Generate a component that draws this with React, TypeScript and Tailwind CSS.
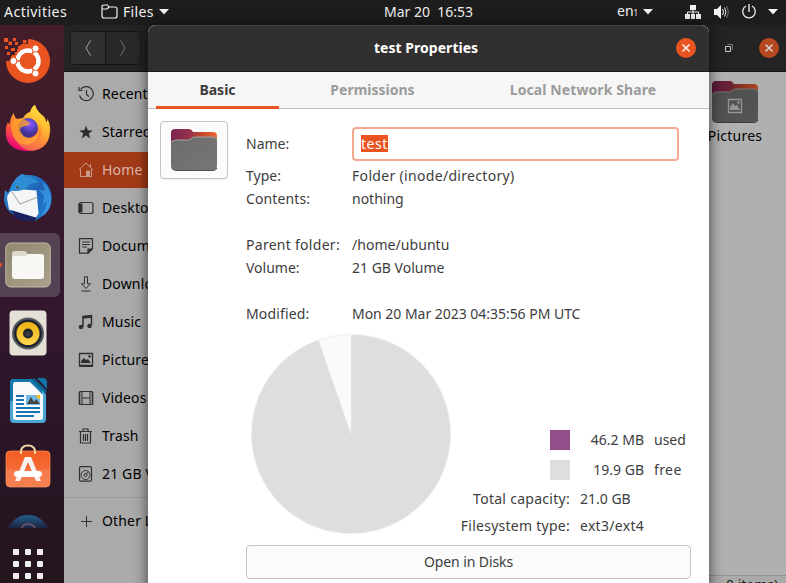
import React from "react";

type IconProps = { className?: string };

const FolderBig = ({ picture, dim }: { picture?: boolean; dim?: boolean }) => (
  <svg width="48" height="44" viewBox="0 0 48 44" className={dim ? "shrink-0 brightness-[0.72]" : "shrink-0"}>
    <defs>
      <linearGradient id="fb" x1="0" x2="1"><stop offset="0" stopColor="#7b2350" /><stop offset=".4" stopColor="#94324b" /><stop offset=".65" stopColor="#c2462e" /><stop offset="1" stopColor="#f0652b" /></linearGradient>
      <linearGradient id="ff" x1="0" y1="0" x2="1" y2="1"><stop offset="0" stopColor="#6c6c6c" /><stop offset="1" stopColor="#767676" /></linearGradient>
    </defs>
    <path d="M1 5q0-4 4-4h14q2 0 3 1.500l1 1.500h20q4 0 4 4v9H1z" fill="url(#fb)" />
    <path d="M1 16q0-4 4-4h13q2 0 3-1l1-1q1-1 3-1h18q4 0 4 4v25q0 4-4 4H5q-4 0-4-4z" fill="url(#ff)" />
    <path d="M1.500 15q.5-3 4-3h12.500q2 0 3-1l1-1q1-1 3-1h18q3.500 0 4 3" fill="none" stroke="#a3a3a3" strokeWidth="1" />
    <path d="M2 40q1 2.500 4 2.500h37q3 0 4-2.500" fill="none" stroke="#505050" strokeWidth="1" />
    {picture && <g><path d="M17.500 19.500h13v13h-13z" fill="none" stroke="#cfcfcf" strokeWidth="1.300" /><path d="M19 30v-3l3-4 2 3 2-1 3 5z" fill="#cfcfcf" /><circle cx="27.500" cy="22.500" r="1.300" fill="#cfcfcf" /></g>}
  </svg>
);

const UbuntuLogo = () => (
  <svg width="56" height="56" viewBox="0 0 56 56">
    <circle cx="28" cy="31" r="22" fill="#e95420" />
    <path d="M2 6h26v8h-7v5h-4v6h-5v6H2z" fill="#431e28" />
    <g fill="#e95420"><path d="M4 8h4v4H4zM13 8h3v3h-3zM23 10h3.500v3.500H23zM8.500 11.500H12v3.500H8.500zM15 12h3v3h-3zM5 16h3v3H5zM18 16h4v3h-4zM11 18h4v3h-4zM7 22h3v3H7zM15 22h5v5h-5zM11 26h5v6h-5zM20 15h6v8h-6z" /></g>
    <circle cx="28" cy="31" r="10.500" fill="none" stroke="#fff" strokeWidth="4.500" />
    <g stroke="#e95420" strokeWidth="1.500"><path d="M28 31 36 17M28 31l8 14M28 31H12" /></g>
    <circle cx="28" cy="31" r="8" fill="#e95420" />
    <g fill="#fff" stroke="#e95420" strokeWidth="1"><circle cx="13.500" cy="31" r="3.500" /><circle cx="35.500" cy="18.500" r="3.500" /><circle cx="35.500" cy="43.500" r="3.500" /></g>
  </svg>
);

const Firefox = () => (
  <svg width="48" height="48" viewBox="0 0 48 48">
    <defs>
      <linearGradient id="fx" x1=".8" y1="0" x2=".3" y2="1"><stop offset="0" stopColor="#fff04d" /><stop offset=".35" stopColor="#ffb52e" /><stop offset=".65" stopColor="#ff5d3b" /><stop offset="1" stopColor="#e60078" /></linearGradient>
      <radialGradient id="fxg" cx=".6" cy=".3"><stop offset="0" stopColor="#9059ff" /><stop offset=".6" stopColor="#5a46c8" /><stop offset="1" stopColor="#47308f" /></radialGradient>
      <linearGradient id="fxo" x1="0" y1="0" x2="1" y2="1"><stop offset="0" stopColor="#ff9a22" /><stop offset="1" stopColor="#ffc338" /></linearGradient>
    </defs>
    <path d="M10 8q0 4 3 6l6-1q3-5 7-6 2-6 5-7 2 6 7 10 4 3 4 7 2-1 1-4 4 7 3 15-2 18-22 18Q5 46 2 31q-1-9 2-14 0 2 2 2 0-7 4-11z" fill="url(#fx)" />
    <path d="M26 8q9 3 12 13 1 12-9 17-10 3-18-4 8 14 21 11 13-4 13-17 0-7-3-11-2-1-2-4l-3-4Q33 6 31 0q-4 2-5 8z" fill="#ffcf36" opacity=".4" />
    <circle cx="24" cy="23" r="10" fill="url(#fxg)" />
    <path d="M7 17q5-5 10-2 4-2 6 1l3 2q-1 3-5 3-5 1-5 4 2 7 9 8 6 0 10-6 0 9-9 12-10 2-16-6-3-5-3-16z" fill="url(#fxo)" opacity=".75" />
  </svg>
);

const Thunderbird = () => (
  <svg width="50" height="50" viewBox="0 0 50 50">
    <defs><linearGradient id="tb" x1="0" y1="0" x2="1" y2="1"><stop offset="0" stopColor="#3ca7e8" /><stop offset=".5" stopColor="#1e62b8" /><stop offset="1" stopColor="#2583d0" /></linearGradient></defs>
    <path d="M9 11Q14 3 19 1l4 1q19-1 25 17 3 14-7 23l-9 6 1-4H17Q3 41 1 27l1-10 3 3z" fill="url(#tb)" />
    <path d="M1 27q1 13 10 17l1-1-4-6 26 8-3 3h-5Q13 48 5 39 1 34 1 27z" fill="#1b205f" />
    <path d="M4 25q1-7 9.500-9l20 1.500 2 23-2.500 4-27-8z" fill="#f4f5f6" />
    <path d="m9 19 8 12 18-7" fill="none" stroke="#8a8a8a" strokeWidth=".8" />
    <path d="M9 18Q10 6 22 4q9-1 14 6-8-1-12 4-3 3-9 4z" fill="#2d8ed4" />
    <path d="M36 17l5 6-1 9 4-4-2 9-5 7q12-5 11-20-2-11-10-16 4 6 4 10z" fill="#42a8ec" opacity=".6" />
    <circle cx="14.500" cy="14.500" r="1.200" fill="#5b4a1e" />
  </svg>
);

const FilesApp = () => (
  <svg width="46" height="46" viewBox="0 0 46 46">
    <defs><linearGradient id="fa" x1="0" y1="0" x2="1" y2="1"><stop offset="0" stopColor="#91886f" /><stop offset="1" stopColor="#a9a18c" /></linearGradient></defs>
    <rect x=".8" y="1" width="44.500" height="44" rx="5" fill="url(#fa)" stroke="#c0b9a5" />
    <path d="M7 12q0-3 3-3h10l3 3h13q3 0 3 3v7H7z" fill="#dedacd" />
    <path d="M7 17q0-3 3-3h9q2 0 3-1l1-1h13q3 0 3 3v19q0 3-3 3H10q-3 0-3-3z" fill="#f8f7f4" />
  </svg>
);

const Rhythmbox = () => (
  <svg width="38" height="46" viewBox="0 0 38 46">
    <defs><linearGradient id="rb" x1="0" x2="0" y1="0" y2="1"><stop offset="0" stopColor="#edb211" /><stop offset="1" stopColor="#ffd64d" /></linearGradient></defs>
    <rect x=".5" y=".5" width="37" height="45" rx="4" fill="#e4e0d5" />
    <circle cx="19" cy="23.500" r="15" fill="#23252c" stroke="#575b64" strokeWidth="2" />
    <circle cx="19" cy="23.500" r="11.500" fill="url(#rb)" /><circle cx="19" cy="23.500" r="5" fill="#24262b" /><circle cx="19" cy="24" r="2.500" fill="#3a3c41" />
  </svg>
);

const Writer = () => (
  <svg width="38" height="46" viewBox="0 0 38 46">
    <path d="M5 1h18l14 15v25q0 4-4 4H5q-4 0-4-4V5q0-4 4-4z" fill="#48a8d2" /><path d="M5 1h18l10 11v11H1V5q0-4 4-4z" fill="#1478ad" />
    <path d="M6 4h15l13 13v22q0 3-3 3H7q-3 0-3-3V7q0-3 2-3z" fill="#f8fafb" />
    <path d="M28 0h6q3 0 4 3v8z" fill="#1174a7" /><path d="m24 1 13 13" stroke="#0c638f" strokeWidth="3" />
    <g fill="#1675b1"><path d="M7 17h8v2H7zM7 21h8v2H7zM7 25h8v2H7zM7 29h24v2H7zM7 33h24v2H7zM7 37h18v2H7z" /></g>
    <path d="M17 17h14v10H17z" fill="#72b9e3" /><path d="m18 26 4-7 3 5 2-3 4 5z" fill="#444" /><path d="M27 17h4v4q-3 0-4-4z" fill="#f2bd16" />
  </svg>
);

const Software = () => (
  <svg width="46" height="44" viewBox="0 0 46 44">
    <defs><linearGradient id="so" x1="0" x2="0" y1="0" y2="1"><stop offset="0" stopColor="#f45d24" /><stop offset=".5" stopColor="#f46a34" /><stop offset=".52" stopColor="#f77a4a" /><stop offset="1" stopColor="#f57f50" /></linearGradient></defs>
    <rect x="1" y="7" width="44" height="36" rx="4" fill="url(#so)" stroke="#ff9363" strokeWidth=".7" />
    <path d="M16 10V8q0-6.500 7-6.500T30 8v2" fill="none" stroke="#f5d59f" strokeWidth="2" />
    <path d="M20 13h6l10 24h-5l-8-19-8 19h-5z" fill="#f9f4f0" /><rect x="9" y="27" width="28" height="6" rx="3" fill="#fff" />
  </svg>
);

const symbols: Record<string, React.ReactNode> = {
  recent: <g fill="none" stroke="currentColor" strokeWidth="1.200"><path d="M2.500 3.500a7 7 0 1 1-1 6" /><path d="M1 1v3.500h3.500M8.500 4v4.500l2.500 2" /></g>,
  star: <path d="m8 1.500 1.800 4.700 5 .2-4 3.100 1.500 4.900L8 11.600l-4.300 2.800 1.500-4.900-4-3.100 5-.2z" fill="currentColor" />,
  home: <g fill="none" stroke="currentColor"><path d="M.7 8 8 1l7.300 7M2.500 7v7.500h11V7M12.500 2v3" /><path d="M8.500 9h3v5h-3z" fill="currentColor" /></g>,
  desktop: <g fill="none" stroke="currentColor"><rect x="1" y="2.500" width="14" height="11" rx="2" strokeWidth="1.200" /><path d="M1 4h3v8H1z" fill="currentColor" /></g>,
  doc: <g fill="none" stroke="currentColor" strokeWidth="1.200"><path d="M1.500.7h13v10l-4.500 4.500H1.500z" /><path d="M4 4h8M4 6.500h8M4 9h5" /><path d="M10 15v-4h4z" fill="currentColor" /></g>,
  download: <g fill="none" stroke="currentColor"><path d="M6.500.7h3v7h3L8 12.500 3.500 7.700h3zM3.500 15h9" /></g>,
  music: <g fill="none" stroke="currentColor" strokeWidth="1.500"><path d="M5 13V2.500l8.500-1V11M5 4l8-1" /><circle cx="3" cy="13" r="1.500" fill="currentColor" /><circle cx="11.500" cy="12" r="1.500" fill="currentColor" /></g>,
  picture: <g><path d="M1.500 1.500h13v12h-13z" fill="none" stroke="currentColor" strokeWidth="1.300" /><path d="M1 13h14v2H1zM3 11V9l3-3 2 2 2-1 3 4z" fill="currentColor" /><circle cx="11.500" cy="4.500" r="1.300" fill="currentColor" /></g>,
  video: <g fill="none" stroke="currentColor"><path d="M1.500 1.500h13v13h-13zM4 1.500v13M12 1.500v13M4 8h8" /><path d="M1.500 2v13M14.500 2v13" strokeWidth="2" strokeDasharray="1.500 1" /></g>,
  trash: <g fill="none" stroke="currentColor" strokeWidth="1.200"><path d="M1 3.500h13M5 3V1h5v2M2.500 4v11h10V4M5.500 6v7M7.500 6v7M9.500 6v7" /></g>,
  disk: <g fill="none" stroke="currentColor"><rect x="1.500" y=".7" width="12" height="14.500" rx="1.500" strokeWidth="1.200" /><circle cx="7.500" cy="9" r="4.500" /><circle cx="7.500" cy="9" r="1.500" /><path d="m8 8 2.500-2.500" /></g>,
  plus: <path d="M8.500 3v11M3 8.500h11" stroke="currentColor" />,
};

const Place = ({ icon, label, active }: { icon: string; label: string; active?: boolean }) => (
  <div className={`flex h-9 shrink-0 items-center gap-2 pl-3.5 tracking-[0.15px] ${active ? "bg-[#a33a17] text-[#d9b5a7]" : "text-black"}`}>
    <svg width="16" height="16" viewBox="0 0 16 16" className={`shrink-0 ${active ? "text-[#cc9a88]" : "text-[#303030]"}`}>{symbols[icon]}</svg>
    <span className="whitespace-nowrap">{label}</span>
  </div>
);

const Caret = ({ className }: IconProps) => <svg width="10" height="6" viewBox="0 0 10 6" className={className}><path d="M0 0h10L5 5.500z" fill="currentColor" /></svg>;

const Close = ({ className }: IconProps) => (
  <div className={`flex size-5 items-center justify-center rounded-full ${className}`}>
    <svg width="8" height="8" viewBox="0 0 8 8"><path d="m.5.5 7 7m0-7-7 7" stroke="currentColor" strokeWidth="1.400" /></svg>
  </div>
);

const TopBar = () => (
  <header className="flex h-[25px] shrink-0 items-center bg-[#1d1d1d] pb-[2px] text-[#f2f2f2]">
    <span className="ml-1 w-[97px] tracking-[0.48px]">Activities</span>
    <svg width="17" height="16" viewBox="0 0 17 16"><path d="M1 12V3q0-2 2-2h3.500l1.500 2h6q2 0 2 2v7q0 2-2 2H3q-2 0-2-2zM1 5h5l2-2" fill="none" stroke="currentColor" strokeWidth="1.200" /></svg>
    <span className="ml-[5px] w-9 tracking-[0.35px]">Files</span><Caret />
    <span className="ml-[215px] w-[233px] whitespace-pre">Mar 20  16:53</span>
    <span className="w-[26px]">en<small className="text-[8px]">1</small></span><Caret />
    <svg className="ml-[32px]" width="16" height="16" viewBox="0 0 16 16" fill="currentColor"><path d="M5 1h6v5H5zM0 10h5v5H0zM6 10h4v5H6zM11 10h5v5h-5z" /><path d="M8 5v6M2.500 11V8h11v3" fill="none" stroke="currentColor" /></svg>
    <svg className="ml-[12px]" width="16" height="16" viewBox="0 0 16 16"><path d="M1 5h3l4-4v14l-4-4H1z" fill="currentColor" /><path d="M9.500 5q2 3 0 6M11.500 3.500q3 4.500 0 9" fill="none" stroke="currentColor" /><path d="M13.500 2q3.500 6 0 12" fill="none" stroke="#777" /></svg>
    <svg className="ml-[12px]" width="16" height="16" viewBox="0 0 16 16"><path d="M5 2a6.300 6.300 0 1 0 6 0M8 0v8" fill="none" stroke="currentColor" strokeWidth="1.300" /></svg>
    <Caret className="ml-[11px]" />
  </header>
);

const Dock = () => (
  <nav className="flex w-16 shrink-0 flex-col overflow-hidden bg-linear-to-b from-[#431e28] via-[#32172f] to-[#23141d]">
    <div className="h-[73px] pt-[5px]"><UbuntuLogo /></div>
    <div className="h-[75px] pt-[7px] pl-1"><Firefox /></div>
    <div className="h-[60px] pl-[3px]"><Thunderbird /></div>
    <div className="flex h-16 w-[60px] items-center rounded-r-md bg-[#554252]"><div className="h-1 w-[2px] rounded-r bg-[#e95420]" /><div className="ml-[3px]"><FilesApp /></div></div>
    <div className="h-[68px] pt-[13px] pl-[9px]"><Rhythmbox /></div>
    <div className="h-[68px] pt-[13px] pl-[9px]"><Writer /></div>
    <div className="h-[70px] pt-[11px] pl-[5px]"><Software /></div>
    <div className="flex h-[25px] items-end pl-2"><svg width="40" height="13" viewBox="0 0 40 13"><defs><linearGradient id="hp" x1="0" x2="0" y1="0" y2="1"><stop offset="0" stopColor="#245d8d" /><stop offset="1" stopColor="#1c2340" /></linearGradient></defs><path d="M0 13Q7 0 20 0t20 13z" fill="url(#hp)" /><path d="M14 13q1-4 6-4t7 4" stroke="#615066" strokeWidth="2" fill="none" /></svg></div>
    <div className="mt-[21px] ml-[13px] grid w-[30px] shrink-0 grid-cols-3 gap-1.5">
      {Array.from({ length: 9 }, (_, i) => <i key={i} className="size-1.5 rounded-[1px] bg-[#eee]" />)}
    </div>
  </nav>
);

const FilesWindow = () => (
  <main className="flex min-w-0 flex-1 flex-col">
    <div className="flex h-[47px] shrink-0 items-center border-b border-[#111] bg-[#242222] pl-1.5">
      <div className="flex h-[34px] w-[71px] overflow-hidden rounded border border-[#171616] bg-[#292828] text-[#aaa]">
        <div className="flex flex-1 items-center justify-center border-r border-[#171616] bg-[#312f30]"><svg width="6" height="16" viewBox="0 0 6 16"><path d="M5.500.5 1 8l4.500 7.500" fill="none" stroke="currentColor" /></svg></div>
        <div className="flex flex-1 items-center justify-center"><svg width="6" height="16" viewBox="0 0 6 16"><path d="M.5.5 5 8 .5 15.500" fill="none" stroke="#707070" /></svg></div>
      </div>
      <svg className="ml-[584px]" width="8" height="8" viewBox="0 0 8 8"><path d="M.5 2.500h5v5h-5z" fill="none" stroke="#c8c8c8" /><path d="M2.500.5h5v5" fill="none" stroke="#777" /></svg>
      <Close className="ml-[26px] bg-[#b54820] text-[#ddd]" />
    </div>
    <div className="flex min-h-0 flex-1">
      <aside className="flex w-[180px] shrink-0 flex-col gap-0.5 overflow-hidden bg-[#aaa] pt-1">
        <Place icon="recent" label="Recent" /><Place icon="star" label="Starred" /><Place icon="home" label="Home" active /><Place icon="desktop" label="Desktop" /><Place icon="doc" label="Documents" /><Place icon="download" label="Downloads" /><Place icon="music" label="Music" /><Place icon="picture" label="Pictures" /><Place icon="video" label="Videos" /><Place icon="trash" label="Trash" /><Place icon="disk" label="21 GB Volume" />
        <div className="my-[3px] h-px shrink-0 bg-[#999]" />
        <Place icon="plus" label="Other Locations" />
      </aside>
      <section className="flex flex-1 flex-col justify-between overflow-hidden bg-[#b0b0b0]">
        <div className="ml-[455px] flex w-[72px] flex-col items-center pt-2 text-black"><FolderBig picture dim /><span className="mt-[2px] tracking-[0.25px]">Pictures</span></div>
        <div className="h-2 border-t border-[#929292] bg-[#aaa] pl-[482px] leading-[18px] whitespace-nowrap text-[#222]">0 items)</div>
      </section>
    </div>
  </main>
);

const Row = ({ label, value, className = "", labelClass = "", valueClass = "" }: { label: string; value: string; className?: string; labelClass?: string; valueClass?: string }) => (
  <div className={`flex h-[23px] items-center whitespace-nowrap ${className}`}><span className={`w-[106px] ${labelClass}`}>{label}</span><span className={valueClass}>{value}</span></div>
);

const Properties = () => (
  <div className="absolute top-[25px] left-[148px] flex h-[570px] w-[561px] flex-col rounded-t-lg bg-white text-[#3d3d3d] shadow-[0_0_14px_rgba(0,0,0,0.65)]">
    <div className="flex h-[47px] shrink-0 items-center rounded-t-lg border-t border-b border-t-[#454344] border-b-[#1c1a1b] bg-[#322f30] pb-px pl-[226px] font-bold text-white">
      <span className="w-[302px] tracking-[0.03px]">test Properties</span><Close className="bg-[#e95420] text-white" />
    </div>
    <div className="flex h-[37px] shrink-0 border-b border-[#bfbfbf] bg-[#f6f6f6] pl-2 text-center leading-[36px] font-bold text-[#9b9b9b]">
      <div className="h-[37px] w-[123px] border-b-[3px] border-[#e95420] text-[#3d3d3d]">Basic</div><div className="ml-4 w-[155px]">Permissions</div><div className="ml-[52px] w-[162px] tracking-[0.1px]">Local Network Share</div>
    </div>
    <div className="flex px-3 pt-3">
      <div className="flex h-[58px] w-[68px] shrink-0 items-center justify-center rounded border border-[#c4c4c4] bg-[#fbfbfb] shadow-[0_1px_1px_#eee]"><FolderBig /></div>
      <div className="ml-[18px] flex w-[445px] flex-col">
        <div className="flex h-[46px] items-center"><span className="w-[106px]">Name:</span><div className="flex h-[34px] w-[327px] items-center rounded border-2 border-[#f4aa90] pb-px pl-[7px]"><span className="bg-[#e95420] leading-[17px] tracking-[0.5px] text-white">test</span></div></div>
        <div className="-mt-[3px]"><Row label="Type:" value="Folder (inode/directory)" valueClass="tracking-[0.32px]" /><Row label="Contents:" labelClass="tracking-[0.12px]" value="nothing" /></div>
        <Row className="mt-[23px]" label="Parent folder:" labelClass="tracking-[0.28px]" value="/home/ubuntu" valueClass="tracking-[0.05px]" /><Row label="Volume:" value="21 GB Volume" />
        <Row className="mt-[23px]" label="Modified:" labelClass="tracking-[0.15px]" value="Mon 20 Mar 2023 04:35:56 PM UTC" valueClass="tracking-[-0.03px]" />
        <div className="flex h-[220px]">
          <svg width="210" height="210" viewBox="0 0 210 210"><circle cx="105" cy="109" r="99.500" fill="#dedede" stroke="#ececec" /><path d="M105 109V9.500A99.500 99.500 0 0 0 72.500 15z" fill="#fafafa" stroke="#eee" strokeWidth=".5" /></svg>
          <div className="flex w-[235px] flex-col pt-[100px] whitespace-nowrap">
            <div className="flex h-[30px] items-center"><i className="ml-[94px] size-5 bg-[#924d8b]" /><span className="w-[74px] text-right">46.2 MB</span><span className="ml-[10px]">used</span></div>
            <div className="flex h-[30px] items-center"><i className="ml-[94px] size-5 bg-[#dedede]" /><span className="w-[74px] text-right">19.9 GB</span><span className="ml-[10px] tracking-[0.4px]">free</span></div>
            <div className="flex h-[28px] items-center"><span className="w-[114px] text-right tracking-[0.28px]">Total capacity:</span><span className="ml-[10px]">21.0 GB</span></div>
            <div className="flex h-[26px] items-center"><span className="flex w-[114px] justify-end tracking-[0.26px]">Filesystem type:</span><span className="ml-[10px] tracking-[0.3px]">ext3/ext4</span></div>
          </div>
        </div>
        <div className="flex h-[34px] items-center justify-center rounded border border-[#c4c4c4] bg-[#fbfbfb] tracking-[-0.1px]">Open in Disks</div>
      </div>
    </div>
  </div>
);

export default function App() {
  return (
    <div className="relative flex h-[583px] w-[786px] flex-col overflow-hidden bg-[#b0b0b0] font-['Noto_Sans',sans-serif] text-[14px] leading-[20px]">
      <TopBar />
      <div className="flex min-h-0 flex-1"><Dock /><FilesWindow /></div>
      <Properties />
    </div>
  );
}
